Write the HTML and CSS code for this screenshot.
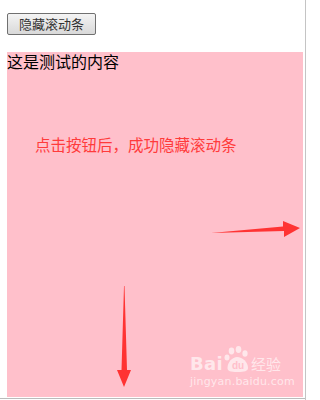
FILE: index.html
```html
<!DOCTYPE html>
<html lang="zh">
<head>
<meta charset="utf-8">
<title>隐藏滚动条</title>
<link rel="stylesheet" href="styles.css">
</head>
<body>
<div class="window">
  <div class="toolbar"><button class="btn" type="button">隐藏滚动条</button></div>
  <div class="box">
    <p class="content">这是测试的内容</p>
    <p class="note">点击按钮后，成功隐藏滚动条</p>
    <svg class="arrow-right" width="92" height="20" viewBox="0 0 92 20">
      <path d="M0 13 L72 6.5 L72 1 L89 8 L73 17 L73 11 Z" fill="#ff3333"/>
    </svg>
    <svg class="arrow-down" width="20" height="104" viewBox="0 0 20 104">
      <path d="M10 0 L10.5 0 L13 84 L17 84 L10 101 L3 84 L7.5 84 Z" fill="#ff3333"/>
    </svg>
    <div class="watermark">
      <div class="wm-top">
        <span class="wm-bai">Bai</span>
        <svg class="wm-paw" width="26" height="26" viewBox="0 0 26 26">
          <ellipse cx="7.5" cy="5" rx="2.8" ry="3.4" fill="#fff"/>
          <ellipse cx="14.5" cy="3.5" rx="2.8" ry="3.4" fill="#fff"/>
          <ellipse cx="21" cy="7.5" rx="2.6" ry="3.2" fill="#fff"/>
          <ellipse cx="3" cy="11.5" rx="2.5" ry="3" fill="#fff"/>
          <path d="M3.5 22 C3.5 16 8.5 11 13 11 C18.5 11 24 16 24 22 C24 25 20.5 26 13.5 26 C6 26 3.5 25 3.5 22 Z" fill="#fff"/>
          <text x="14" y="23" text-anchor="middle" font-family="Liberation Sans, sans-serif" font-size="10" font-weight="bold" fill="#ffc0cb">du</text>
        </svg>
        <span class="wm-jy">经验</span>
      </div>
      <div class="wm-url">jingyan.baidu.com</div>
    </div>
  </div>
  <div class="below">一一 一 一 一一 一</div>
</div>
</body>
</html>
```
FILE: styles.css
```css
html, body {
  margin: 0;
  padding: 0;
  background: #ffffff;
  overflow: hidden;
}
body {
  width: 306px;
  height: 400px;
  font-family: "Noto Sans CJK SC", "Liberation Sans", sans-serif;
}
.window {
  width: 305px;
  height: 400px;
  border-right: 1px solid #c4c4c4;
  overflow: hidden;
}
.toolbar {
  padding: 13px 0 0 7px;
  height: 22px;
}
.btn {
  display: block;
  width: 89px;
  height: 22px;
  margin: 0;
  padding: 0;
  border: 1px solid #707070;
  border-radius: 2px;
  background: linear-gradient(#f4f4f4, #e6e6e6 50%, #d9d9d9);
  font-family: "Noto Sans CJK SC", sans-serif;
  font-size: 13px;
  line-height: 20px;
  color: #333;
}
.box {
  position: relative;
  margin: 17px 0 0 7px;
  width: 296px;
  height: 345px;
  background: #ffc0cb;
}
.content {
  margin: 0;
  font-size: 16px;
  line-height: 18px;
  color: #000;
}
.note {
  margin: 64px 0 0 28px;
  font-size: 15.5px;
  line-height: 20px;
  color: #ff3b3b;
}
.arrow-right {
  position: absolute;
  left: 204px;
  top: 168px;
}
.arrow-down {
  position: absolute;
  left: 107px;
  top: 234px;
}
.watermark {
  position: absolute;
  left: 183px;
  top: 294px;
  width: 110px;
  opacity: 0.62;
  color: #fff;
}
.wm-top {
  display: flex;
  align-items: flex-end;
  height: 26px;
}
.wm-bai {
  font-family: "DejaVu Sans", sans-serif;
  font-weight: bold;
  font-size: 18px;
  line-height: 16px;
  letter-spacing: 0.3px;
}
.wm-paw {
  display: block;
  margin: 0 1px 0 1px;
}
.wm-jy {
  font-family: "Noto Sans CJK SC", sans-serif;
  font-size: 15px;
  line-height: 17px;
}
.wm-url {
  margin-top: 4px;
  font-family: "DejaVu Sans", sans-serif;
  font-size: 11px;
  line-height: 12px;
  letter-spacing: 0.2px;
}
.below {
  margin: 1px 0 0 0;
  padding-left: 30px;
  font-size: 14px;
  line-height: 14px;
  color: #888;
  border-top: 1px solid #bbb;
}
```
